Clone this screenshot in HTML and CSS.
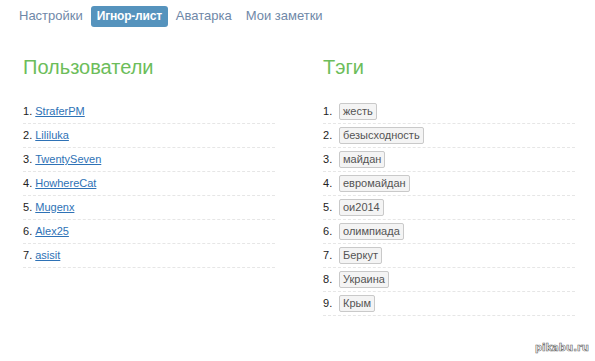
FILE: index.html
```
<!DOCTYPE html>
<html lang="ru">
  <head>
    <meta charset="UTF-8" />
    <title>Игнор-лист</title>
    <link rel="stylesheet" href="styles.css">
  </head>
  <body>
    <div class="page">
      <div class="tabs">
        <a class="tab" href="#">Настройки</a>
        <a class="tab active" href="#">Игнор-лист</a>
        <a class="tab" href="#">Аватарка</a>
        <a class="tab" href="#">Мои заметки</a>
      </div>

      <div class="columns">
        <div class="column">
          <h2 class="column-title">Пользователи</h2>
          <ol class="ignore-list">
            <li><a href="#">StraferPM</a></li>
            <li><a href="#">Lililuka</a></li>
            <li><a href="#">TwentySeven</a></li>
            <li><a href="#">HowhereCat</a></li>
            <li><a href="#">Mugenx</a></li>
            <li><a href="#">Alex25</a></li>
            <li><a href="#">asisit</a></li>
          </ol>
        </div>

        <div class="column">
          <h2 class="column-title">Тэги</h2>
          <ol class="ignore-list tags">
            <li><span class="tag">жесть</span></li>
            <li><span class="tag">безысходность</span></li>
            <li><span class="tag">майдан</span></li>
            <li><span class="tag">евромайдан</span></li>
            <li><span class="tag">ои2014</span></li>
            <li><span class="tag">олимпиада</span></li>
            <li><span class="tag">Беркут</span></li>
            <li><span class="tag">Украина</span></li>
            <li><span class="tag">Крым</span></li>
          </ol>
        </div>
      </div>
    </div>
    <div class="watermark">pikabu.ru</div>
  </body>
</html>
```

FILE: styles.css
```
body {
  margin: 0;
  font-family: "Liberation Sans", Arial, sans-serif;
  background: #fff;
  color: #222;
  width: 595px;
  height: 361px;
  overflow: hidden;
  position: relative;
}

.page {
  padding: 6px 0 0 13px;
}

.tabs {
  display: flex;
  gap: 2px;
}

.tab {
  display: block;
  padding: 3px 6px 4px;
  font-size: 13px;
  line-height: 14px;
  color: #6f88a8;
  text-decoration: none;
  border-radius: 3px;
}

.tab.active {
  background: #5593bd;
  color: #fff;
  font-size: 12px;
  font-weight: bold;
  letter-spacing: -0.2px;
}

.columns {
  display: grid;
  grid-template-columns: 252px 252px;
  column-gap: 48px;
  padding-left: 10px;
  margin-top: 28px;
}

.column-title {
  margin: 0 0 21px;
  font-size: 20px;
  line-height: 24px;
  font-weight: normal;
  color: #6cbd5a;
}

.ignore-list {
  margin: 0;
  padding: 0;
  list-style: none;
  counter-reset: item;
}

.ignore-list li {
  counter-increment: item;
  height: 23px;
  border-bottom: 1px dashed #e6e6e6;
  font-size: 11px;
  line-height: 13px;
  display: flex;
  align-items: center;
}

.ignore-list li::before {
  content: counter(item) ". ";
  white-space: pre;
  color: #222;
}

.ignore-list a {
  color: #2e72b6;
}

.tags li::before {
  width: 16px;
}

.tag {
  display: inline-block;
  padding: 1px 3px;
  border: 1px solid #c9c9c9;
  border-radius: 2px;
  background: #f4f4f4;
  color: #555;
}

.watermark {
  position: absolute;
  right: 6px;
  bottom: 8px;
  font-family: "DejaVu Sans", sans-serif;
  font-size: 10px;
  font-weight: bold;
  color: #fff;
  -webkit-text-stroke: 0.6px #666;
}
```
